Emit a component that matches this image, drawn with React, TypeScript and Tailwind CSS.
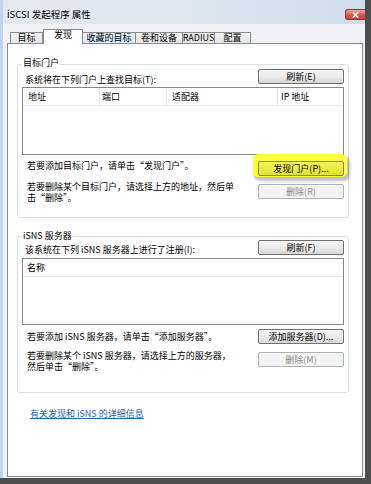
import React from 'react';

const tabs = [
  { label: '目标', cls: 'w-[33px]', state: 'normal' },
  { label: '发现', cls: 'w-[40px]', state: 'active' },
  { label: '收藏的目标', cls: 'w-[54px]', state: 'hover' },
  { label: '卷和设备', cls: 'w-[48px]', state: 'normal' },
  { label: 'RADIUS', cls: 'w-[33px]', state: 'normal' },
  { label: '配置', cls: 'w-[37px]', state: 'normal' },
];

const Button = ({
  children,
  disabled,
  highlight,
}: {
  children: React.ReactNode;
  disabled?: boolean;
  highlight?: boolean;
}) => {
  if (disabled) {
    return (
      <div className="w-[86px] h-[15px] shrink-0 rounded-[2px] border border-[#adb2b5] bg-[#f4f4f4] text-[#8a8a8a] text-[9px] leading-none flex items-center justify-center">
        {children}
      </div>
    );
  }
  if (highlight) {
    return (
      <div className="w-[86px] h-[15px] shrink-0 rounded-[2px] border border-[#8a8a40] bg-linear-to-b from-[#f4f45c] to-[#e2e22c] text-[9px] leading-none flex items-center justify-center shadow-[-1px_-3px_0_4px_#ffff3c,1px_0px_3px_5px_rgba(0,0,0,0.25)]">
        {children}
      </div>
    );
  }
  return (
    <div className="w-[86px] h-[15px] shrink-0 rounded-[2px] border border-[#707070] bg-linear-to-b from-[#f4f4f4] via-[#ebebeb] to-[#d8d8d8] text-[9px] leading-none flex items-center justify-center">
      {children}
    </div>
  );
};

const GroupBox = ({
  title,
  titleCls,
  className,
  children,
}: {
  title: string;
  titleCls: string;
  className: string;
  children: React.ReactNode;
}) => (
  <div className={`relative ml-[9px] w-[332px] border border-[#d5dfe5] rounded-[3px] px-[4px] ${className}`}>
    <div className={`absolute left-[4px] bg-white px-[1px] text-[9px] leading-[10px] ${titleCls}`}>{title}</div>
    {children}
  </div>
);

export default function App() {
  return (
    <div
      lang="zh-CN"
      className="w-[371px] h-[484px] flex flex-col border-r-[6px] border-b-[6px] border-[#4e4e4e] bg-[#f1f0f5] text-black font-['Noto_Sans_CJK_SC','Noto_Sans',sans-serif]"
    >
      <div className="flex flex-col h-full border-l-[3px] border-[#bfd4ee]">
        {/* title bar */}
        <div className="h-[24px] shrink-0 flex items-start pl-[4px] bg-linear-to-r from-[#e4e8ee] via-[#dfe6ee] to-[#cddcec]">
          <span className="mt-[9px] text-[9.5px] leading-[10px]">iSCSI 发起程序 属性</span>
          <div className="ml-auto mt-[9px] w-[20px] h-[11px] rounded-l-[3px] border border-r-0 border-[#8f3a33] bg-linear-to-b from-[#e9a99a] via-[#d0604f] to-[#c0463a] flex items-center justify-center">
            <svg width="7" height="6" viewBox="0 0 7 6">
              <path d="M1 0.5 L6 5.5 M6 0.5 L1 5.5" stroke="#ffffff" strokeWidth="1.6" />
            </svg>
          </div>
        </div>

        {/* body */}
        <div className="flex-1 flex flex-col pl-[4px] pr-[2px] pb-[1px] pt-[5px]">
          <div className="h-[14px] flex items-end pl-[3px]">
            {tabs.map((t) =>
              t.state === 'active' ? (
                <div
                  key={t.label}
                  className={`${t.cls} h-[15px] -mb-px relative z-10 bg-white border border-b-0 border-[#898c95] text-[9px] leading-[10px] flex items-start justify-center`}
                >
                  {t.label}
                </div>
              ) : (
                <div
                  key={t.label}
                  className={`${t.cls} h-[11px] -ml-px first:ml-0 border border-b-0 border-[#898c95] text-[9px] leading-[10px] flex items-center justify-center ${
                    t.state === 'hover'
                      ? 'bg-linear-to-b from-[#eaf6fd] to-[#cfe9fa]'
                      : 'bg-linear-to-b from-[#f4f4f4] to-[#e4e4e4]'
                  }`}
                >
                  {t.label}
                </div>
              )
            )}
          </div>

          {/* tab panel */}
          <div className="flex-1 bg-white border border-[#898c95] pt-[20px]">
            <GroupBox title="目标门户" titleCls="-top-[7px]" className="pt-[4px] pb-[14px]">
              <div className="h-[15px] flex items-end justify-between">
                <span className="ml-[3px] text-[9px] leading-[10px] -mb-px">系统将在下列门户上查找目标(T):</span>
                <Button>刷新(E)</Button>
              </div>

              <div className="mt-[3px] h-[68px] border border-[#828790] bg-white">
                <div className="h-[18px] flex border-b border-[#e8e8e8] text-[9px] leading-[10px]">
                  <div className="w-[77px] border-r border-[#e3e3e3] pl-[5px] flex items-center">地址</div>
                  <div className="w-[67px] border-r border-[#e3e3e3] pl-[2px] flex items-center">端口</div>
                  <div className="w-[111px] border-r border-[#e3e3e3] pl-[5px] flex items-center">适配器</div>
                  <div className="flex-1 pl-[3px] flex items-center">IP 地址</div>
                </div>
              </div>

              <div className="mt-[6px] h-[14px] flex items-start justify-between">
                <span className="ml-[5px] text-[9px] leading-[10px]">若要添加目标门户，请单击“发现门户”。</span>
                <Button highlight>发现门户(P)...</Button>
              </div>

              <div className="mt-[6px] flex items-start justify-between">
                <span className="ml-[5px] text-[9px] leading-[11px]">
                  若要删除某个目标门户，请选择上方的地址，然后单
                  <br />
                  击“删除”。
                </span>
                <div className="mt-[3px]">
                  <Button disabled>删除(R)</Button>
                </div>
              </div>
            </GroupBox>

            <GroupBox title="iSNS 服务器" titleCls="-top-[6px]" className="mt-[18px] pt-[3px] pb-[20px]">
              <div className="h-[15px] flex items-end justify-between">
                <span className="ml-[3px] text-[9px] leading-[10px]">该系统在下列 iSNS 服务器上进行了注册(I):</span>
                <Button>刷新(F)</Button>
              </div>

              <div className="mt-[3px] h-[67px] border border-[#828790] bg-white">
                <div className="h-[18px] flex border-b border-[#e8e8e8] text-[9px] leading-[10px]">
                  <div className="flex-1 pl-[4px] flex items-center">名称</div>
                </div>
              </div>

              <div className="mt-[4px] h-[15px] flex items-center justify-between">
                <span className="ml-[5px] text-[9px] leading-[10px]">若要添加 iSNS 服务器，请单击“添加服务器”。</span>
                <Button>添加服务器(D)...</Button>
              </div>

              <div className="mt-[6px] flex items-start justify-between">
                <span className="ml-[5px] text-[9px] leading-[11px]">
                  若要删除某个 iSNS 服务器，请选择上方的服务器，
                  <br />
                  然后单击“删除”。
                </span>
                <div className="mt-[2px]">
                  <Button disabled>删除(M)</Button>
                </div>
              </div>
            </GroupBox>

            <div className="mt-[16px] ml-[22px] text-[9px] leading-[10px] text-[#1a5fb4] underline">
              有关发现和 iSNS 的详细信息
            </div>
          </div>
        </div>
      </div>
    </div>
  );
}
